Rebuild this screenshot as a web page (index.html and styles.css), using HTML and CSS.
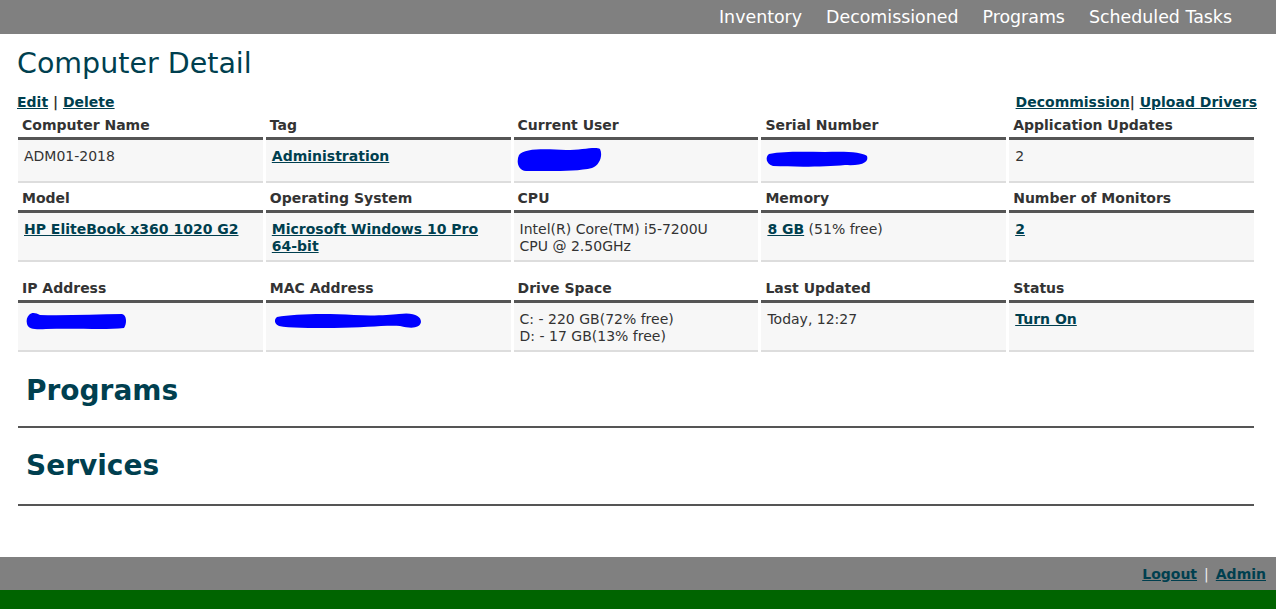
FILE: index.html
```html
<!DOCTYPE html>
<html>
<head>
<meta charset="utf-8">
<title>Computer Detail</title>
<link rel="stylesheet" href="styles.css">
</head>
<body>
<header class="topbar">
  <nav class="nav">
    <a href="#">Inventory</a>
    <a href="#">Decomissioned</a>
    <a href="#">Programs</a>
    <a href="#">Scheduled Tasks</a>
  </nav>
</header>

<main class="main">
  <h1 class="title">Computer Detail</h1>

  <div class="actions">
    <div><a href="#">Edit</a> | <a href="#">Delete</a></div>
    <div><a href="#">Decommission</a>| <a href="#">Upload Drivers</a></div>
  </div>

  <table class="info info-first">
    <tr>
      <th>Computer Name</th><th>Tag</th><th>Current User</th><th>Serial Number</th><th>Application Updates</th>
    </tr>
    <tr class="tall">
      <td>ADM01-2018</td>
      <td><a href="#" class="blink">Administration</a></td>
      <td><svg class="blob" width="86" height="28" viewBox="0 0 86 28"><path d="M3 10 C8 3 30 4 50 5 C66 5 80 1 84 4 C87 10 84 20 76 23 C60 27 30 26 10 26 C2 25 0 17 3 10 Z" fill="#0000ff"/></svg></td>
      <td><svg class="blob blob-serial" width="104" height="18" viewBox="0 0 104 18"><path d="M4 4 C20 1 40 2 60 2 C80 1 98 2 102 6 C104 12 98 16 80 15 C60 17 30 17 8 16 C1 14 0 7 4 4 Z" fill="#0000ff"/></svg></td>
      <td>2</td>
    </tr>
  </table>

  <table class="info">
    <tr>
      <th>Model</th><th>Operating System</th><th>CPU</th><th>Memory</th><th>Number of Monitors</th>
    </tr>
    <tr>
      <td><a href="#" class="blink">HP EliteBook x360 1020 G2</a></td>
      <td><a href="#" class="blink">Microsoft Windows 10 Pro 64-bit</a></td>
      <td>Intel(R) Core(TM) i5-7200U<br>CPU @ 2.50GHz</td>
      <td><a href="#" class="blink">8 GB</a> (51% free)</td>
      <td><a href="#" class="blink">2</a></td>
    </tr>
  </table>

  <table class="info info-last">
    <tr>
      <th>IP Address</th><th>MAC Address</th><th>Drive Space</th><th>Last Updated</th><th>Status</th>
    </tr>
    <tr>
      <td><svg class="blob blob-ip" width="102" height="19" viewBox="0 0 102 19"><path d="M3 3 C6 0 10 1 14 3 C40 4 70 2 96 2 C101 3 101 12 98 16 C80 18 50 16 20 17 C10 18 2 17 1 12 C0 8 1 5 3 3 Z" fill="#0000ff"/></svg></td>
      <td><svg class="blob blob-ip" width="148" height="18" viewBox="0 0 148 18"><path d="M3 5 C20 2 50 1 80 3 C100 4 115 3 125 2 C140 0 147 4 147 10 C146 16 138 17 126 14 C110 13 90 16 60 16 C35 16 15 16 5 14 C0 12 0 7 3 5 Z" fill="#0000ff"/></svg></td>
      <td>C: - 220 GB(72% free)<br>D: - 17 GB(13% free)</td>
      <td>Today, 12:27</td>
      <td><a href="#" class="blink">Turn On</a></td>
    </tr>
  </table>

  <section class="section">
    <h2 class="section-title">Programs</h2>
  </section>
  <section class="section">
    <h2 class="section-title">Services</h2>
  </section>
</main>

<footer class="footer">
  <div class="footer-bar">
    <a href="#">Logout</a> <span class="sep">|</span> <a href="#">Admin</a>
  </div>
  <div class="footer-green"></div>
</footer>
</body>
</html>
```

FILE: styles.css
```css
* { box-sizing: border-box; }

html, body {
  margin: 0;
  padding: 0;
  background: #ffffff;
  font-family: "DejaVu Sans", Verdana, sans-serif;
  color: #333333;
}

body {
  min-height: 609px;
  display: flex;
  flex-direction: column;
}

a { color: #003f4f; }

.topbar {
  height: 34px;
  background: #808080;
  display: flex;
  justify-content: flex-end;
  align-items: center;
  padding-right: 44px;
}

.nav {
  display: flex;
  gap: 24px;
}

.nav a {
  color: #ffffff;
  text-decoration: none;
  font-size: 17.4px;
  line-height: 20px;
  margin-top: -1px;
}

.main {
  padding: 0 19px 0 15px;
  flex: 1;
}

.title {
  margin: 13px 0 0 0;
  padding-left: 2px;
  font-size: 28.5px;
  font-weight: normal;
  color: #003f4f;
  line-height: 34px;
  height: 34px;
}

.actions {
  display: flex;
  justify-content: space-between;
  margin-top: 13px;
  font-size: 14px;
  line-height: 17px;
  font-weight: bold;
  color: #333;
}

.actions div { padding-left: 2px; }

.info {
  width: 100%;
  table-layout: fixed;
  border-collapse: separate;
  border-spacing: 3px 0;
  margin-bottom: 4px;
}

.info th {
  text-align: left;
  font-size: 14px;
  line-height: 17px;
  font-weight: bold;
  color: #333333;
  padding: 3px 4px 3px 4px;
  border-bottom: 3px solid #555555;
}

.info td {
  background: #f7f7f7;
  border-bottom: 2px solid #dddddd;
  font-size: 14px;
  line-height: 17px;
  padding: 8px 6px 5px 6px;
  vertical-align: top;
  color: #333333;
}

.info-first { margin-top: 3px; }

.tall td { height: 43px; }

.info-last { margin-top: 15px; }

.blink { font-weight: bold; }

.blob { display: block; margin: -3px 0 0 -4px; }
.blob-serial { margin: 2px 0 0 -2px; }
.blob-ip { margin: 1px 0 0 2px; }

.section {
  border-bottom: 2px solid #555555;
  margin-left: 3px;
  margin-right: 3px;
  height: 78px;
  display: flex;
  align-items: center;
}

.section:first-of-type { height: 72px; margin-top: 3px; }

.section-title {
  margin: 0;
  font-size: 28px;
  font-weight: bold;
  color: #003f4f;
  padding-left: 8px;
  line-height: 34px;
}

.footer-bar {
  height: 33px;
  background: #808080;
  display: flex;
  justify-content: flex-end;
  align-items: center;
  padding-right: 10px;
  font-size: 14px;
  font-weight: bold;
  gap: 7px;
}

.footer-bar .sep { color: #eeeeee; font-weight: normal; }

.footer-green {
  height: 19px;
  background: #006400;
}
```
